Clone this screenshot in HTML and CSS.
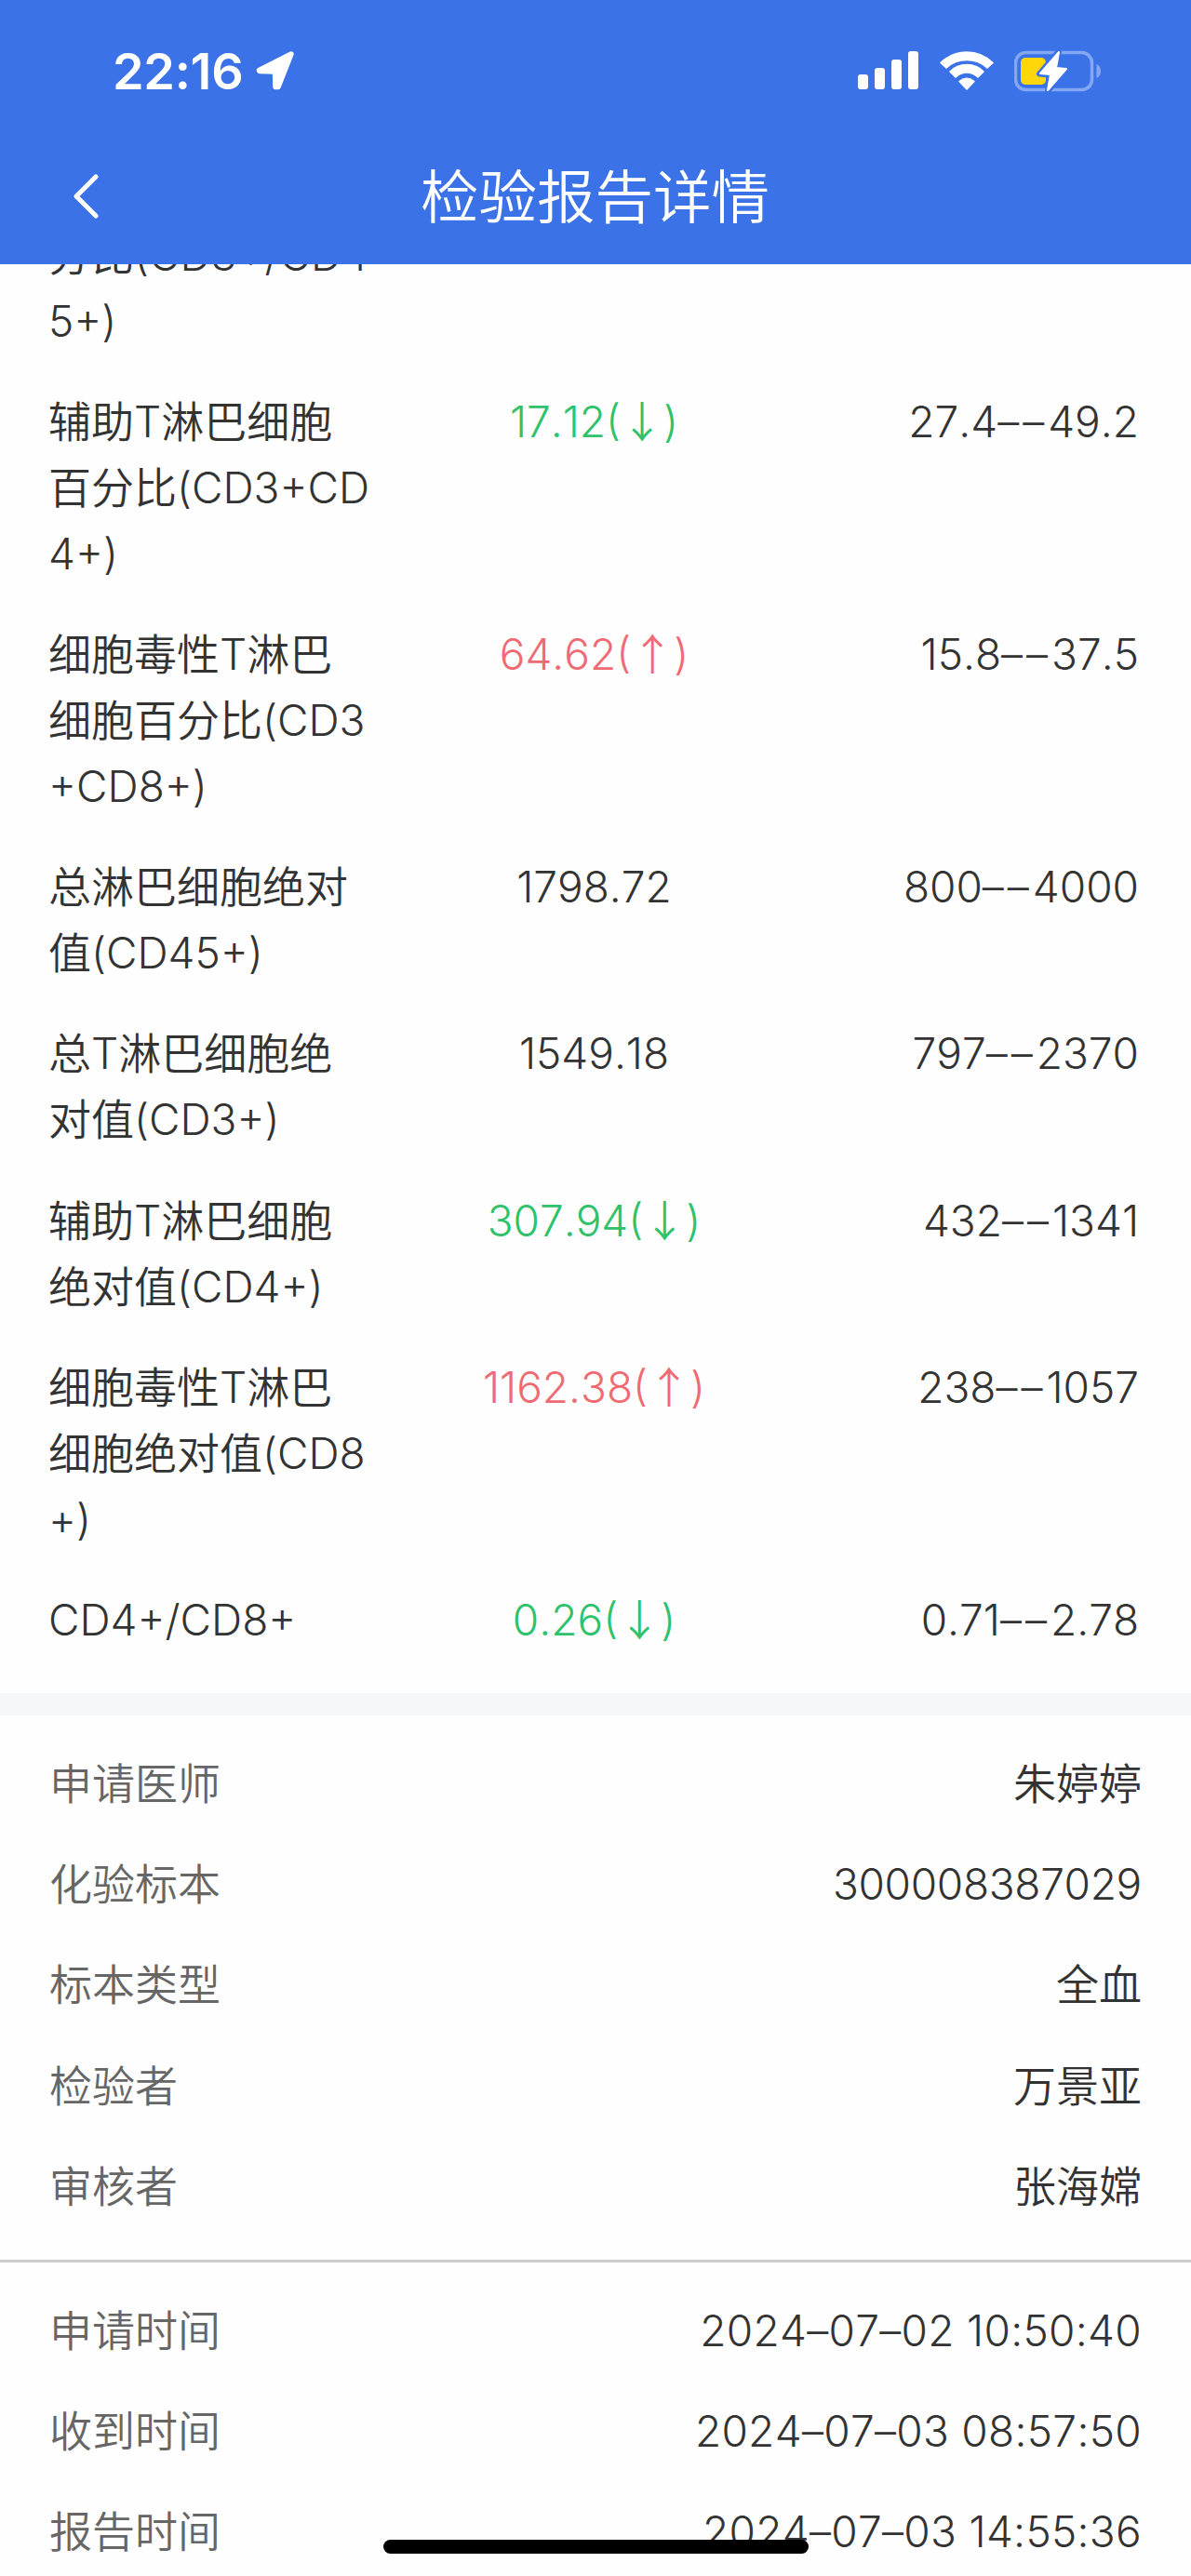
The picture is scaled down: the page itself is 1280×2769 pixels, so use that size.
FILE: index.html
```
<!DOCTYPE html>
<html lang="zh-CN">
<head>
  <meta charset="UTF-8">
  <meta name="viewport" content="width=device-width, initial-scale=1.0">
  <title>检验报告详情</title>
  <link rel="stylesheet" href="styles.css">
</head>
<body>
  <header>
    <div class="status-bar">
      <span class="clock">22:16</span>
      <svg class="location" width="42" height="42" viewBox="0 0 42 42">
        <path d="M3.500 20.500 38 3 24 38.500 21 38.500 20.500 22 4 21.500Z" fill="#fff" stroke="#fff" stroke-width="5.500" stroke-linejoin="round"/>
      </svg>
      <svg class="signal" width="66" height="42" viewBox="0 0 66 42">
        <g fill="#fff">
          <rect x="0" y="25" width="11" height="16" rx="3"/>
          <rect x="18" y="18" width="11" height="23" rx="3"/>
          <rect x="36" y="9" width="11" height="32" rx="3"/>
          <rect x="54" y="0" width="11" height="41" rx="3"/>
        </g>
      </svg>
      <svg class="wifi" width="58" height="42" viewBox="0 0 58 42">
        <g fill="#fff" stroke="#fff" stroke-width="1.500" stroke-linejoin="round">
          <path d="M1 12.500Q13 1 29 1T57 12.500L51 18Q42 9.500 29 9.500T7 18Z"/>
          <path d="M11 22Q18 14.500 29 14.500T47 22L41 28Q36 23 29 23T17 28Z"/>
          <path d="M21 32.500Q29 26 37 32.500L29 41Z"/>
        </g>
      </svg>
      <svg class="battery" width="96" height="46" viewBox="0 0 96 46">
        <rect x="1.500" y="3.500" width="82" height="40" rx="11" fill="none" stroke="#84a7f4" stroke-width="3.500"/>
        <path d="M88.500 16Q93 18 93 23.500T88.500 31Z" fill="#84a7f4"/>
        <rect x="7" y="9" width="27" height="29" rx="5" fill="#ffd60a"/>
        <path d="M48 2 27 26.500 39 27.500 36 45 57 20.500 45 19.500Z" fill="#fff" stroke="#3b72e8" stroke-width="6" stroke-linejoin="round"/>
        <path d="M48 3 28 26 39 27 36 44 56 21 45 20Z" fill="#fff" stroke="#fff" stroke-width="2" stroke-linejoin="round"/>
      </svg>
    </div>
    <div class="nav-bar">
      <svg class="back" width="30" height="50" viewBox="0 0 30 50">
        <path d="M26 3 5 24 26 45" fill="none" stroke="#fff" stroke-width="5" stroke-linecap="round" stroke-linejoin="round"/>
      </svg>
      <h1>检验报告详情</h1>
    </div>
  </header>

  <main>
    <section class="results">
      <div class="result">
        <div class="name">分比(CD3+/CD4<br>5+)</div>
      </div>
      <div class="result">
        <div class="name">辅助T淋巴细胞<br>百分比(CD3+CD<br>4+)</div>
        <div class="value low">17.12(<i>↓</i>)</div>
        <div class="range">27.4<span class="dash">––</span>49.2</div>
      </div>
      <div class="result">
        <div class="name">细胞毒性T淋巴<br>细胞百分比(CD3<br>+CD8+)</div>
        <div class="value high">64.62(<i>↑</i>)</div>
        <div class="range">15.8<span class="dash">––</span>37.5</div>
      </div>
      <div class="result">
        <div class="name">总淋巴细胞绝对<br>值(CD45+)</div>
        <div class="value">1798.72</div>
        <div class="range">800<span class="dash">––</span>4000</div>
      </div>
      <div class="result">
        <div class="name">总T淋巴细胞绝<br>对值(CD3+)</div>
        <div class="value">1549.18</div>
        <div class="range">797<span class="dash">––</span>2370</div>
      </div>
      <div class="result">
        <div class="name">辅助T淋巴细胞<br>绝对值(CD4+)</div>
        <div class="value low">307.94(<i>↓</i>)</div>
        <div class="range">432<span class="dash">––</span>1341</div>
      </div>
      <div class="result">
        <div class="name">细胞毒性T淋巴<br>细胞绝对值(CD8<br>+)</div>
        <div class="value high">1162.38(<i>↑</i>)</div>
        <div class="range">238<span class="dash">––</span>1057</div>
      </div>
      <div class="result">
        <div class="name">CD4+/CD8+</div>
        <div class="value low">0.26(<i>↓</i>)</div>
        <div class="range">0.71<span class="dash">––</span>2.78</div>
      </div>
    </section>

    <section class="info people">
      <div class="info-row"><span>申请医师</span><b>朱婷婷</b></div>
      <div class="info-row"><span>化验标本</span><b class="number">300008387029</b></div>
      <div class="info-row"><span>标本类型</span><b>全血</b></div>
      <div class="info-row"><span>检验者</span><b>万景亚</b></div>
      <div class="info-row"><span>审核者</span><b>张海嫦</b></div>
    </section>

    <section class="info times">
      <div class="info-row"><span>申请时间</span><b>2024–07–02 10:50:40</b></div>
      <div class="info-row"><span>收到时间</span><b>2024–07–03 08:57:50</b></div>
      <div class="info-row"><span>报告时间</span><b>2024–07–03 14:55:36</b></div>
    </section>
  </main>

  <div class="home-indicator"></div>
</body>
</html>
```

FILE: styles.css
```
* {
  box-sizing: border-box;
}
body {
  margin: 0;
  height: 2769px;
  display: flex;
  flex-direction: column;
  overflow: hidden;
  background: #fefefe;
  color: #333;
  font-family: Inter, "Noto Sans CJK SC", sans-serif;
  font-size: 46px;
  font-weight: 350;
  font-kerning: none;
  line-height: 71px;
}
header {
  flex: none;
  height: 284px;
  background: #3b72e8;
  color: #fff;
}
.status-bar {
  display: flex;
  align-items: center;
  height: 138px;
  padding: 14px 94px 0 121px;
}
.clock {
  width: 154px;
  font-size: 54px;
  font-weight: 600;
  font-kerning: auto;
  letter-spacing: -0.3px;
  white-space: nowrap;
}
.signal {
  margin-left: auto;
}
.wifi {
  margin-left: 22px;
}
.battery {
  margin-left: 22px;
}
.nav-bar {
  display: flex;
  align-items: center;
  height: 148px;
  padding: 0 77px;
}
.nav-bar h1 {
  flex: 1;
  margin: 0 31px 0 0;
  font-size: 62.500px;
  font-weight: 350;
  text-align: center;
}
main {
  flex: 1;
  min-height: 0;
  overflow: hidden;
}

/* results table */
.results {
  margin-top: -64px;
  padding: 0 56px 24px 52px;
  border-bottom: 24px solid #f5f7fb;
}
.result {
  display: grid;
  grid-template-columns: 382px 409px 1fr;
  padding: 18.600px 0;
}
.name {
  white-space: nowrap;
}
.value {
  text-align: center;
}
.range {
  text-align: right;
}
.dash {
  letter-spacing: 4px;
}
.low {
  color: #2dc26b;
}
.high {
  color: #ef6b73;
}
.value i {
  font-family: "Noto Sans CJK SC", sans-serif;
  font-style: normal;
  line-height: 1;
}

/* report details */
.info {
  padding: 20px 53px 0 53px;
}
.people {
  height: 588px;
  border-bottom: 3px solid #ccc;
}
.info-row {
  display: flex;
  justify-content: space-between;
  align-items: center;
  height: 108.200px;
}
.info-row span {
  color: #666;
}
.info-row b {
  font-weight: 350;
}
.info-row .number {
  letter-spacing: -0.3px;
}
.times b {
  letter-spacing: 0.3px;
}
.home-indicator {
  position: fixed;
  left: 412px;
  top: 2730px;
  width: 457px;
  height: 15px;
  border-radius: 8px;
  background: #000;
}
```
